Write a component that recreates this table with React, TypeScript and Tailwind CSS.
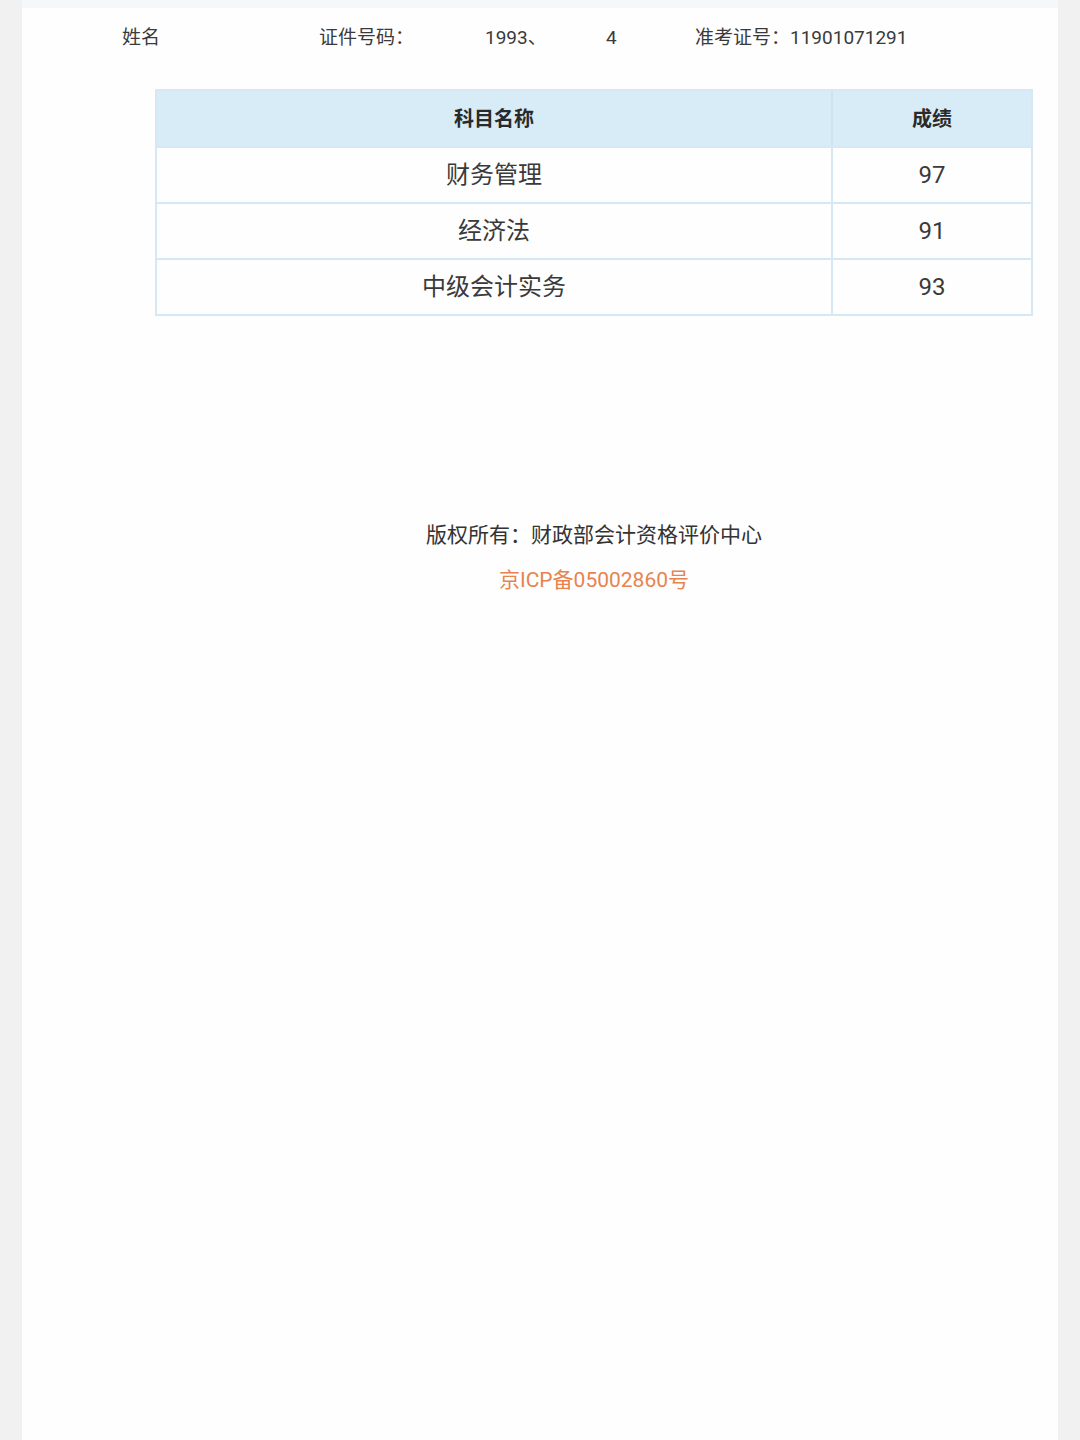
import React from "react";

const rows = [
  { name: "财务管理", score: "97" },
  { name: "经济法", score: "91" },
  { name: "中级会计实务", score: "93" },
];

export default function App() {
  return (
    <div
      className="w-[1080px] h-[1440px] bg-[#f1f1f1] flex justify-center"
      style={{ fontFamily: "Roboto, 'Noto Sans CJK SC', sans-serif" }}
    >
      <div className="w-[1036px] h-full bg-[#fefefe] flex flex-col">
        <div className="h-[8px] bg-[#f4f8fb]" />
        <div className="flex items-center h-[61px] pl-[100px] text-[19px] text-[#3a3a3a]">
          <span className="w-[197px]">姓名</span>
          <span className="w-[166px]">证件号码：</span>
          <span className="w-[121px]">1993、</span>
          <span className="w-[89px]">4</span>
          <span>准考证号：11901071291</span>
        </div>
        <div className="pl-[133px] pt-[20px]">
          <div className="w-[878px] border-2 border-[#d6e8f4]">
            <div className="flex h-[55px] bg-[#d8ecf8] text-[20px] font-bold text-[#2a2a2a]">
              <div className="w-[676px] flex items-center justify-center border-r-2 border-[#cfe3f1]">
                科目名称
              </div>
              <div className="flex-1 flex items-center justify-center">成绩</div>
            </div>
            {rows.map((r) => (
              <div
                key={r.name}
                className="flex h-[56px] border-t-2 border-[#d6e8f4] text-[24px] text-[#3a3a3a]"
              >
                <div className="w-[676px] flex items-center justify-center border-r-2 border-[#d6e8f4]">
                  {r.name}
                </div>
                <div className="flex-1 flex items-center justify-center">{r.score}</div>
              </div>
            ))}
          </div>
        </div>
        <div className="pl-[133px] pt-[206px]">
          <div className="w-[878px] flex flex-col items-center">
            <div className="text-[21px] text-[#333] leading-[26px]">版权所有：财政部会计资格评价中心</div>
            <div className="text-[21px] text-[#e8834f] leading-[26px] mt-[19px]">京ICP备05002860号</div>
          </div>
        </div>
      </div>
    </div>
  );
}
